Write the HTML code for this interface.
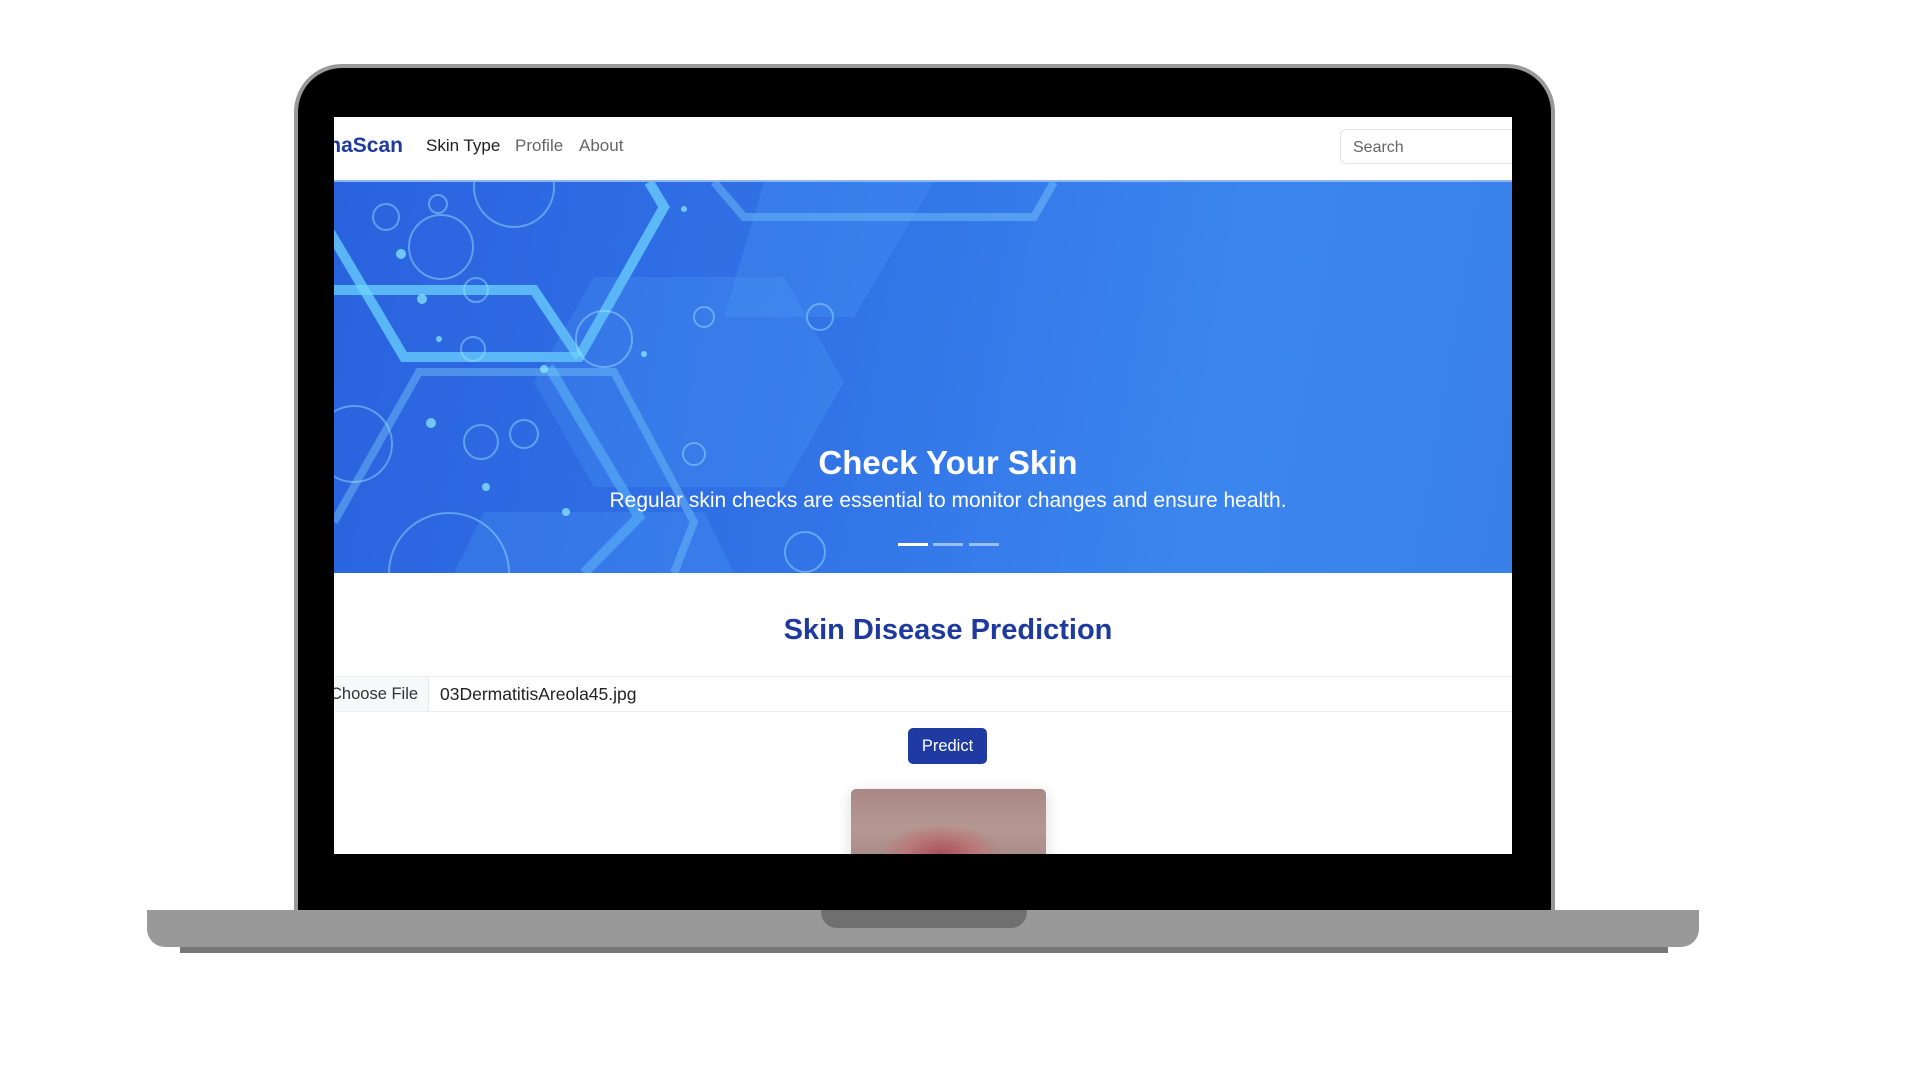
<!DOCTYPE html>
<html><head><meta charset="utf-8"><style>
*{margin:0;padding:0;box-sizing:border-box}
body{width:1920px;height:1080px;background:#fff;position:relative;overflow:hidden;font-family:"Liberation Sans",sans-serif}
.lid{position:absolute;left:294px;top:64px;width:1261px;height:860px;background:#000;border:4px solid #999;border-bottom:none;border-radius:48px 48px 0 0}
.screen{position:absolute;left:334px;top:117px;width:1178px;height:737px;background:#fff;overflow:hidden}
.base{position:absolute;left:147px;top:910px;width:1552px;height:37px;background:#999;border-radius:0 0 18px 18px}
.shadow{position:absolute;left:180px;top:945px;width:1488px;height:8px;background:#777;z-index:-1}
.notch{position:absolute;left:821px;top:910px;width:206px;height:18px;background:#6f6f6f;border-radius:0 0 16px 16px}
.nav{position:absolute;left:0;top:0;width:100%;height:65px;border-bottom:2px solid #8fb4f2}
.brand{position:absolute;right:1109px;top:17px;font-size:21px;font-weight:bold;color:#1e3a9f}
.link{position:absolute;top:19px;font-size:17px;color:#666}
.search{position:absolute;left:1006px;top:12px;width:180px;height:35px;border:1px solid #e4e4e4;border-radius:6px;font-size:16px;color:#666;padding:9px 12px}
.car{position:absolute;left:0;top:65px;width:1178px;height:391px;background:linear-gradient(100deg,#2a62de 0%,#3172e6 40%,#3b86ee 75%,#3a80ea 100%);overflow:hidden}
.t1{position:absolute;left:25px;width:1178px;text-align:center;top:262px;font-size:33px;font-weight:bold;color:#fff}
.t2{position:absolute;left:25px;width:1178px;text-align:center;top:307px;font-size:21px;color:#fff}
.ind{position:absolute;top:361px;height:3px;width:30px;background:rgba(255,255,255,.5)}
.h2{position:absolute;left:25px;width:1178px;text-align:center;top:497px;font-size:29px;font-weight:bold;color:#1e3a9f}
.file{position:absolute;left:0;top:559px;width:100%;height:36px;border-top:1px solid #eee;border-bottom:1px solid #eee}
.cf{position:absolute;left:-12px;top:0;width:107px;height:34px;background:#f7f8f9;border-right:1px solid #e8e8e8;font-size:16.5px;color:#333;padding:8px 0 0 8px}
.fn{position:absolute;left:106px;top:7px;font-size:17.5px;color:#222}
.btn{position:absolute;left:574px;top:611px;width:79px;height:36px;background:#1f3aa3;color:#fff;border-radius:5px;font-size:16.5px;text-align:center;padding-top:9px}
.img{position:absolute;left:517px;top:672px;width:195px;height:80px;border-radius:5px;background:radial-gradient(ellipse 60px 30px at 90px 65px,#a8505a,#b87a78 60%,transparent 100%),linear-gradient(#a88885,#b59894 50%,#a48582);box-shadow:0 4px 16px rgba(0,0,0,.15)}
</style></head><body>
<div class="shadow"></div>
<div class="lid"></div>
<div class="base"></div>
<div class="notch"></div>
<div class="screen">
 <div class="nav">
  <div class="brand">naScan</div>
  <div class="link" style="left:92px;color:#222">Skin Type</div>
  <div class="link" style="left:181px">Profile</div>
  <div class="link" style="left:245px">About</div>
  <div class="search">Search</div>
 </div>
 <div class="car">
  <svg width="1178" height="391" style="position:absolute;left:0;top:0">
   <g fill="none" stroke="#6fd8ff" stroke-opacity=".7" stroke-width="10">
    <polyline points="-10,40 70,175 245,175 330,25 315,0"/>
    <polyline points="-10,108 200,108 245,175"/>
    <polyline points="215,185 305,335 250,391" stroke-opacity=".4"/>
   </g>
   <g fill="none" stroke="#8fe0ff" stroke-opacity=".35" stroke-width="8">
    <polyline points="0,340 85,190 280,190 360,340 340,391"/>
    <polyline points="380,0 410,35 700,35 720,0"/>
   </g>
   <g fill="#5db0ff" fill-opacity=".18">
    <polygon points="260,95 450,95 510,200 450,305 260,305 200,200"/>
    <polygon points="430,0 600,0 520,135 390,135"/>
    <polygon points="150,330 370,330 400,391 120,391"/>
   </g>
   <g fill="none" stroke="#9fe6ff" stroke-opacity=".45" stroke-width="2">
    <circle cx="107" cy="65" r="32"/><circle cx="52" cy="35" r="13"/><circle cx="104" cy="22" r="9"/>
    <circle cx="180" cy="5" r="40"/><circle cx="142" cy="108" r="12"/><circle cx="139" cy="167" r="12"/>
    <circle cx="270" cy="157" r="28"/><circle cx="370" cy="135" r="10"/><circle cx="486" cy="135" r="13"/>
    <circle cx="147" cy="260" r="17"/><circle cx="190" cy="252" r="14"/><circle cx="20" cy="262" r="38"/>
    <circle cx="360" cy="272" r="11"/><circle cx="115" cy="391" r="60"/><circle cx="471" cy="370" r="20"/>
   </g>
   <g fill="#8ff0ff" fill-opacity=".7">
    <circle cx="88" cy="117" r="5"/><circle cx="67" cy="72" r="5"/><circle cx="105" cy="157" r="3"/>
    <circle cx="210" cy="187" r="4"/><circle cx="97" cy="241" r="5"/><circle cx="152" cy="305" r="4"/>
    <circle cx="350" cy="27" r="3"/><circle cx="310" cy="172" r="3"/><circle cx="232" cy="330" r="4"/>
   </g>
  </svg>
  <div class="t1">Check Your Skin</div>
  <div class="t2">Regular skin checks are essential to monitor changes and ensure health.</div>
  <div class="ind" style="left:564px;background:#fff"></div>
  <div class="ind" style="left:599px"></div>
  <div class="ind" style="left:635px"></div>
 </div>
 <div class="h2">Skin Disease Prediction</div>
 <div class="file"><div class="cf">Choose File</div><div class="fn">03DermatitisAreola45.jpg</div></div>
 <div class="btn">Predict</div>
 <div class="img"></div>
</div>
</body></html>
